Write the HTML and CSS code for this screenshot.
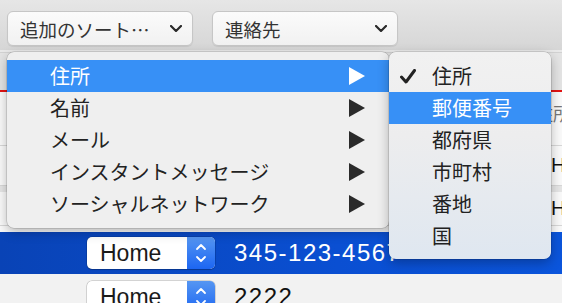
FILE: index.html
```html
<!DOCTYPE html>
<html lang="ja">
<head>
<meta charset="utf-8">
<link rel="stylesheet" href="styles.css">
</head>
<body>
<div class="window">
  <header class="toolbar">
    <div class="popup popup-sort">
      <span class="popup-label">追加のソート…</span>
      <svg class="chev" width="12" height="7" viewBox="0 0 12 7"><path d="M1 1 L6 6 L11 1" fill="none" stroke="#2a2a2a" stroke-width="2.2" stroke-linecap="round" stroke-linejoin="round"/></svg>
    </div>
    <div class="popup popup-contacts">
      <span class="popup-label">連絡先</span>
      <svg class="chev" width="12" height="7" viewBox="0 0 12 7"><path d="M1 1 L6 6 L11 1" fill="none" stroke="#2a2a2a" stroke-width="2.2" stroke-linecap="round" stroke-linejoin="round"/></svg>
    </div>
  </header>

  <section class="content">
    <div class="card">
      <div class="card-head"></div>
      <div class="card-row label-row"><span class="peek">住所</span></div>
      <div class="card-row"><span class="peek peek-latin">Home</span></div>
      <div class="card-row alt"><span class="peek peek-latin">Home</span></div>
    </div>
  </section>

  <div class="row selected">
    <div class="field">
      <span class="field-label">Home</span>
      <span class="stepper">
        <svg width="12" height="22" viewBox="0 0 12 22"><path d="M2 7 L6 3 L10 7" fill="none" stroke="#fff" stroke-width="1.8" stroke-linecap="round" stroke-linejoin="round"/><path d="M2 15 L6 19 L10 15" fill="none" stroke="#fff" stroke-width="1.8" stroke-linecap="round" stroke-linejoin="round"/></svg>
      </span>
    </div>
    <span class="value">345-123-4567</span>
  </div>
  <div class="row">
    <div class="field">
      <span class="field-label">Home</span>
      <span class="stepper">
        <svg width="12" height="22" viewBox="0 0 12 22"><path d="M2 7 L6 3 L10 7" fill="none" stroke="#fff" stroke-width="1.8" stroke-linecap="round" stroke-linejoin="round"/><path d="M2 15 L6 19 L10 15" fill="none" stroke="#fff" stroke-width="1.8" stroke-linecap="round" stroke-linejoin="round"/></svg>
      </span>
    </div>
    <span class="value dark">2222</span>
  </div>

  <ul class="menu menu-main">
    <li class="item active"><span>住所</span><svg class="tri" width="16" height="18" viewBox="0 0 16 18"><path d="M0 0 L16 9 L0 18 Z" fill="#fff"/></svg></li>
    <li class="item"><span>名前</span><svg class="tri" width="16" height="18" viewBox="0 0 16 18"><path d="M0 0 L16 9 L0 18 Z" fill="#2a2a2a"/></svg></li>
    <li class="item"><span>メール</span><svg class="tri" width="16" height="18" viewBox="0 0 16 18"><path d="M0 0 L16 9 L0 18 Z" fill="#2a2a2a"/></svg></li>
    <li class="item"><span>インスタントメッセージ</span><svg class="tri" width="16" height="18" viewBox="0 0 16 18"><path d="M0 0 L16 9 L0 18 Z" fill="#2a2a2a"/></svg></li>
    <li class="item"><span>ソーシャルネットワーク</span><svg class="tri" width="16" height="18" viewBox="0 0 16 18"><path d="M0 0 L16 9 L0 18 Z" fill="#2a2a2a"/></svg></li>
  </ul>

  <ul class="menu menu-sub">
    <li class="item checked"><svg class="check" width="16" height="15" viewBox="0 0 16 15"><path d="M1.5 8 L6 13 L14.5 1.5" fill="none" stroke="#222" stroke-width="3" stroke-linecap="round" stroke-linejoin="round"/></svg><span>住所</span></li>
    <li class="item active"><span>郵便番号</span></li>
    <li class="item"><span>都府県</span></li>
    <li class="item"><span>市町村</span></li>
    <li class="item"><span>番地</span></li>
    <li class="item"><span>国</span></li>
  </ul>
</div>
</body>
</html>
```

FILE: styles.css
```css
* { box-sizing: border-box; }
html, body { margin: 0; padding: 0; }
body {
  width: 562px;
  height: 303px;
  overflow: hidden;
  font-family: "Noto Sans CJK JP", "Noto Sans", sans-serif;
  background: #f2f2f2;
}
.window {
  position: relative;
  width: 562px;
  height: 303px;
  overflow: hidden;
}

/* toolbar */
.toolbar {
  height: 50px;
  display: flex;
  align-items: flex-start;
  gap: 19px;
  padding: 11px 0 0 7px;
  background: linear-gradient(#e6e6e6, #d6d6d6);
}
.popup {
  height: 35px;
  display: flex;
  align-items: center;
  justify-content: space-between;
  padding: 0 10px 0 12px;
  border: 1px solid #c6c6c6;
  border-radius: 6px;
  background: linear-gradient(#fbfbfb, #f1f1f1);
  box-shadow: 0 1px 1px rgba(0,0,0,.08);
  color: #333;
  font-size: 18.5px;
}
.popup-sort { width: 186px; }
.popup-contacts { width: 186px; }
.popup-label { line-height: 1; padding-top: 1px; }
.chev { display: block; }

/* background content */
.content {
  height: 182px;
  background: #e9e9e9;
  padding-top: 2px;
}
.card {
  height: 180px;
  background: #fafafa;
  border-top: 1px solid #d2d2d2;
  display: flex;
  flex-direction: column;
}
.card-head {
  height: 39px;
  background: #e4e4e4;
  border-bottom: 2px solid #e31414;
}
.card-row {
  height: 40px;
  display: flex;
  align-items: center;
  padding-left: 551px;
  border-bottom: 1px solid #d8d8d8;
  font-size: 18px;
  color: #444;
  white-space: nowrap;
}
.label-row {
  height: 54px;
  align-items: flex-start;
  padding-top: 8px;
  padding-left: 535px;
  color: #777;
}
.card-row.alt { border-top: 6px solid #e6e6e6; }
.peek-latin {
  font-family: "Liberation Sans", Arial, sans-serif;
  font-size: 20px;
  color: #111;
}

/* rows */
.row {
  height: 42px;
  display: flex;
  align-items: center;
  gap: 19px;
  padding-left: 87px;
  background: #f2f2f2;
}
.row.selected {
  background: linear-gradient(90deg, #0943b6, #0a4fd2 60%, #0b55dc);
  margin-bottom: 2px;
}
.field {
  width: 128px;
  height: 32px;
  display: flex;
  border-radius: 5px;
  background: #fff;
  box-shadow: 0 0 0 0.5px rgba(0,0,0,.25), 0 1px 1px rgba(0,0,0,.15);
  overflow: hidden;
}
.field-label {
  flex: 1;
  display: flex;
  align-items: center;
  padding-left: 13px;
  font-family: "Liberation Sans", Arial, sans-serif;
  font-size: 23px;
  color: #1a1a1a;
}
.stepper {
  width: 28px;
  display: flex;
  align-items: center;
  justify-content: center;
  background: linear-gradient(#5596f2, #1c66f2);
}
.stepper svg { display: block; }
.value {
  font-family: "Liberation Sans", Arial, sans-serif;
  font-size: 24px;
  letter-spacing: 1.5px;
  color: #fff;
  white-space: nowrap;
}
.value.dark { color: #111; }

/* menus */
.menu {
  position: absolute;
  margin: 0;
  padding: 8px 0;
  list-style: none;
  border-radius: 7px;
  box-shadow: 0 0 0 0.5px rgba(0,0,0,.22), 0 4px 12px rgba(0,0,0,.28);
  font-size: 20px;
  color: #222;
}
.menu-main {
  left: 7px;
  top: 52px;
  width: 382px;
  height: 176px;
  background: #efefef;
}
.menu-sub {
  left: 389px;
  top: 52px;
  width: 162px;
  height: 207px;
  background: linear-gradient(#f1f1f1, #ededee 40%, #dfe7f0);
}
.item {
  height: 32px;
  display: flex;
  align-items: center;
  padding-left: 43px;
  position: relative;
  line-height: 1;
}
.menu-main .item { justify-content: space-between; padding-right: 24px; }
.item.active { background: #3790f6; color: #fff; }
.tri { display: block; }
.check { position: absolute; left: 11px; top: 9px; }
```
